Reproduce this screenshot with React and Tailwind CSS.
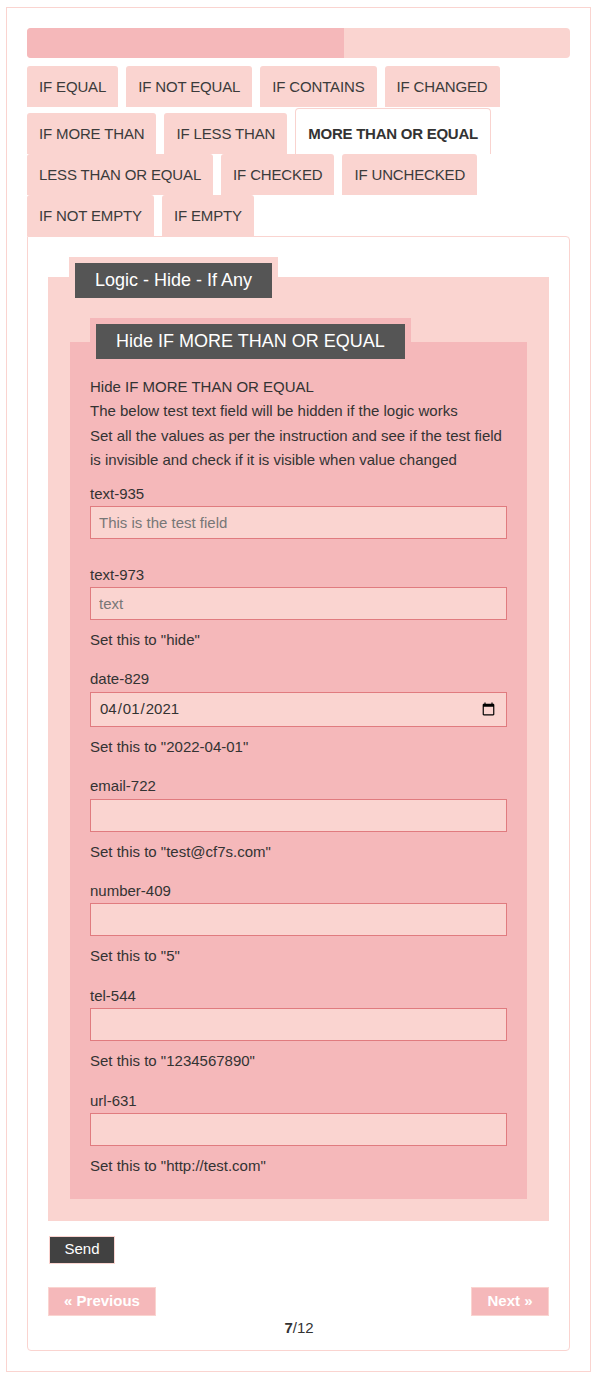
import React from "react";

const tabRows = [
    ["IF EQUAL", "IF NOT EQUAL", "IF CONTAINS", "IF CHANGED"],
    ["IF MORE THAN", "IF LESS THAN", "MORE THAN OR EQUAL"],
    ["LESS THAN OR EQUAL", "IF CHECKED", "IF UNCHECKED"],
    ["IF NOT EMPTY", "IF EMPTY"],
];

const ACTIVE = "MORE THAN OR EQUAL";

const fields = [
    { label: "text-935", placeholder: "This is the test field" },
    { label: "text-973", placeholder: "text", note: 'Set this to "hide"' },
    { label: "date-829", type: "date", value: "2021-04-01", note: 'Set this to "2022-04-01"' },
    { label: "email-722", type: "email", note: 'Set this to "test@cf7s.com"' },
    { label: "number-409", type: "number", note: 'Set this to "5"' },
    { label: "tel-544", type: "tel", note: 'Set this to "1234567890"' },
    { label: "url-631", type: "url", note: 'Set this to "http://test.com"' },
];

const Tab = ({ name }) => {
    if (name === ACTIVE) {
        return (
            <div className="h-[46px] leading-[50px] px-3 bg-white border border-b-0 border-[#f9d3cf] rounded-t-[4px] font-bold tracking-[-0.25px] text-[#333]">
                {name}
            </div>
        );
    }
    return (
        <div className="h-[41px] leading-[41px] px-3 bg-[#fad4d0] rounded-t-[3px] tracking-[-0.15px] text-[#3b3b3b]">
            {name}
        </div>
    );
};

const Field = ({ field, first, last }) => {
    return (
        <div className={`flex flex-col ${first ? "mt-[9px] mb-[23.6px]" : last ? "" : "mb-[15px]"}`}>
            <span className="leading-[24.4px]">{field.label}</span>
            <input
                type={field.type || "text"}
                placeholder={field.placeholder}
                defaultValue={field.value}
                className={`${field.type === "date" ? "h-[35px]" : "h-[33px]"} w-full px-2 bg-[#fad4d0] border border-[#e07b7f] text-[15px] text-[#333] placeholder:text-[#777] outline-none`}
            />
            {field.note && <span className="mt-2 leading-[24.4px]">{field.note}</span>}
        </div>
    );
};

export default function App() {
    return (
        <div className="min-h-screen bg-white pt-[7px] pl-[6px] font-['Liberation_Sans',Arial,sans-serif] text-[15px] text-[#333]">
            <div className="w-[585px] border border-[#fad4d0] p-5">

                {/* progress */}
                <div className="h-[30px] rounded-[4px] bg-[#fad4d0] overflow-hidden">
                    <div className="h-full w-[317px] bg-[#f5b8ba]"></div>
                </div>

                {/* tabs */}
                <div className="mt-2 flex flex-col">
                    {tabRows.map((row, i) => (
                        <div key={i} className={`flex items-end gap-2 ${i === 1 ? "mt-[1px]" : ""}`}>
                            {row.map((t) => <Tab key={t} name={t} />)}
                        </div>
                    ))}
                </div>

                {/* panel */}
                <div className="border border-[#fad4d0] rounded-[4px] rounded-tl-none px-5 pt-10 pb-[10px] flex flex-col">

                    <div className="flex flex-col bg-[#fad4d0] pb-[22px]">
                        <div className="-mt-[20px] ml-[21px] self-start bg-[#fad4d0] p-[6px]">
                            <div className="h-[35px] leading-[35px] px-5 bg-[#555] text-white text-[18px]">
                                Logic - Hide - If Any
                            </div>
                        </div>

                        <div className="mt-[38px] mx-[22px] flex flex-col bg-[#f5b8ba] px-5 pb-[20px]">
                            <div className="-mt-[24px] self-start bg-[#f5b8ba] p-[6px]">
                                <div className="h-[35px] leading-[35px] px-5 bg-[#555] text-white text-[18px]">
                                    Hide IF MORE THAN OR EQUAL
                                </div>
                            </div>

                            <p className="mt-[10px] leading-[24.4px]">
                                Hide IF MORE THAN OR EQUAL<br />
                                The below test text field will be hidden if the logic works<br />
                                Set all the values as per the instruction and see if the test field is invisible and check if it is visible when value changed
                            </p>

                            {fields.map((f, i) => (
                                <Field key={f.label} field={f} first={i === 0} last={i === fields.length - 1} />
                            ))}
                        </div>
                    </div>

                    <button className="mt-[15px] ml-[1px] self-start w-[66px] h-[28px] bg-[#414141] border border-[#fad4d0] text-white text-[15px]">
                        Send
                    </button>

                    <div className="mt-[23px] flex justify-between">
                        <button className="w-[108px] h-[29px] bg-[#f5b8ba] border border-[#fad4d0] text-white font-bold text-[15px]">
                            « Previous
                        </button>
                        <button className="w-[78px] h-[29px] bg-[#f5b8ba] border border-[#fad4d0] text-white font-bold text-[15px]">
                            Next »
                        </button>
                    </div>

                    <div className="text-center leading-6 pl-[1px]">
                        <b>7</b>/12
                    </div>
                </div>
            </div>
        </div>
    );
}
